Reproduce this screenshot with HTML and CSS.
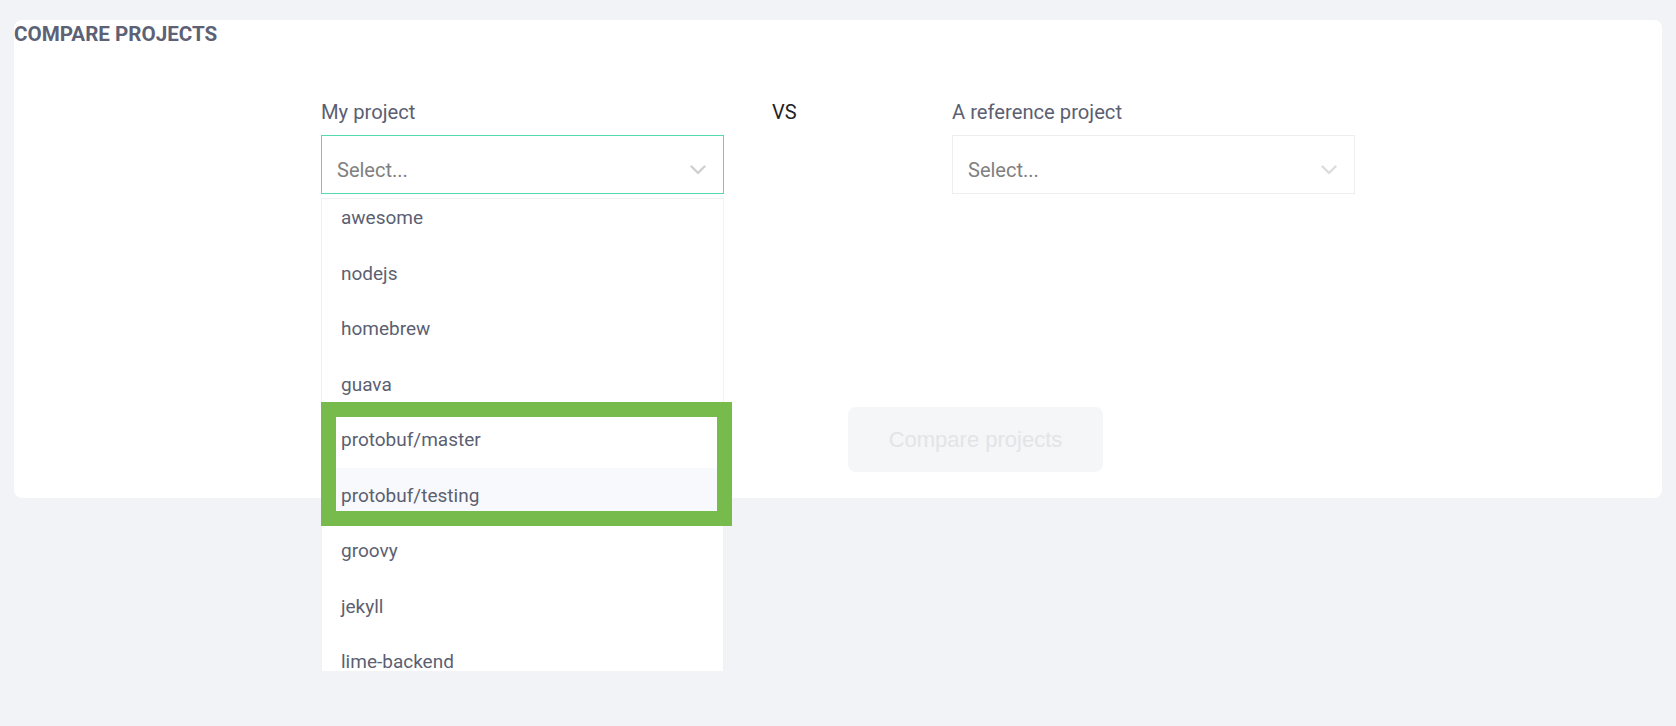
FILE: index.html
```html
<!DOCTYPE html>
<html lang="en">
<head>
<meta charset="utf-8">
<title>Compare projects</title>
<link rel="stylesheet" href="styles.css">
</head>
<body>
<main class="card">
  <h1 class="title">COMPARE PROJECTS</h1>
  <div class="compare-row">
    <div class="field">
      <label class="label">My project</label>
      <div class="select select-focused">
        <span class="placeholder">Select...</span>
        <svg class="chevron" width="16" height="10" viewBox="0 0 16 10"><path d="M1.5 1.5 L8 8 L14.5 1.5" fill="none" stroke="#cfcfcf" stroke-width="2.4" stroke-linecap="round" stroke-linejoin="round"/></svg>
      </div>
      <div class="menu">
        <ul class="menu-list">
          <li class="option">awesome</li>
          <li class="option">nodejs</li>
          <li class="option">homebrew</li>
          <li class="option">guava</li>
          <li class="option">protobuf/master</li>
          <li class="option option-hover">protobuf/testing</li>
          <li class="option">groovy</li>
          <li class="option">jekyll</li>
          <li class="option">lime-backend</li>
        </ul>
      </div>
      <div class="annotation"></div>
    </div>
    <div class="vs">VS</div>
    <div class="field">
      <label class="label">A reference project</label>
      <div class="select">
        <span class="placeholder">Select...</span>
        <svg class="chevron" width="16" height="10" viewBox="0 0 16 10"><path d="M1.5 1.5 L8 8 L14.5 1.5" fill="none" stroke="#dcdcdc" stroke-width="2.4" stroke-linecap="round" stroke-linejoin="round"/></svg>
      </div>
    </div>
  </div>
  <div class="button-row">
    <button class="compare-btn" disabled>Compare projects</button>
  </div>
</main>
</body>
</html>
```

FILE: styles.css
```css
html, body {
  margin: 0;
  padding: 0;
}
html {
  height: 100%;
  background: #f2f3f7;
}
body {
  box-sizing: border-box;
  min-height: 100%;
  background: #f2f3f7;
  padding: 20px 14px;
  font-family: Roboto, "Liberation Sans", Arial, sans-serif;
}
.card {
  background: #ffffff;
  border-radius: 8px;
  padding-bottom: 26px;
}
.title {
  margin: 0;
  padding-top: 2px;
  font-size: 20.6px;
  line-height: 24px;
  font-weight: 700;
  color: #5d6175;
}
.compare-row {
  display: flex;
  justify-content: center;
  margin-top: 54px;
}
.field {
  position: relative;
  width: 403px;
  display: flex;
  flex-direction: column;
}
.label {
  font-size: 20.2px;
  line-height: 24px;
  color: #5c5f72;
  margin-bottom: 11px;
}
.vs {
  width: 180px;
  padding-left: 48px;
  font-size: 20px;
  line-height: 24px;
  color: #222222;
}
.select {
  box-sizing: border-box;
  height: 59px;
  border: 1px solid #eeeeee;
  display: flex;
  align-items: center;
  justify-content: space-between;
  padding: 10px 17px 0 15px;
  background: #ffffff;
}
.select-focused {
  border-color: #55d9b1;
}
.placeholder {
  font-size: 20px;
  color: #808080;
}
.chevron {
  display: block;
}
.menu {
  position: absolute;
  left: 0;
  top: 98px;
  width: 403px;
  height: 473px;
  box-sizing: border-box;
  border: 1px solid #f1f1f4;
  border-bottom: none;
  background: #ffffff;
  overflow: hidden;
  z-index: 2;
}
.menu-list {
  list-style: none;
  margin: -9px 0 0 0;
  padding: 0;
}
.option {
  height: 55.5px;
  line-height: 55.5px;
  padding-left: 19px;
  font-size: 19px;
  color: #5c5f72;
}
.option-hover {
  background: #f8f9fc;
}
.annotation {
  position: absolute;
  left: 0;
  top: 302px;
  width: 411px;
  height: 124px;
  box-sizing: border-box;
  border: 15px solid #76bb4c;
  z-index: 3;
}
.button-row {
  display: flex;
  margin-top: 213px;
  padding-left: 834px;
}
.compare-btn {
  height: 65px;
  width: 255px;
  border: none;
  border-radius: 8px;
  background: #f5f6f8;
  color: #e3e4e7;
  font-family: "Liberation Sans", Arial, sans-serif;
  font-size: 22px;
  padding: 0;
}
```
